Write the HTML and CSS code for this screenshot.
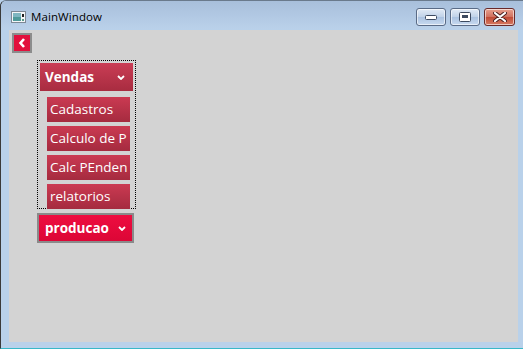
FILE: index.html
```html
<!DOCTYPE html>
<html lang="pt">
    <head>
        <meta charset="utf-8">
        <title>MainWindow</title>
        <link rel="stylesheet" href="styles.css">
    </head>
    <body>
        <div class="window">
            <!-- barra de titulo -->
            <div class="titlebar">
                <span class="app-icon">
                    <svg width="15" height="12" viewBox="0 0 15 12">
                        <rect x="0.5" y="0.5" width="14" height="11" fill="#f4f6f8" stroke="#7d8894"/>
                        <rect x="2" y="2" width="8" height="8" fill="#4f9a9a"/>
                        <rect x="2" y="2" width="8" height="4" fill="#7fb6c0"/>
                        <rect x="11" y="3" width="2" height="3" fill="#202020"/>
                        <rect x="11" y="8" width="2" height="2" fill="#5a9a8a"/>
                    </svg>
                </span>
                <span class="title">MainWindow</span>
                <div class="caption-buttons">
                    <div class="cap-btn">
                        <svg width="12" height="5" viewBox="0 0 12 5"><rect x="0.5" y="0.5" width="11" height="4" rx="1" fill="#fff" stroke="#3c4a60"/></svg>
                    </div>
                    <div class="cap-btn">
                        <svg width="12" height="10" viewBox="0 0 12 10"><rect x="0.5" y="0.5" width="11" height="9" rx="1" fill="#fff" stroke="#3c4a60"/><rect x="3" y="3" width="6" height="3" fill="#3c4a60"/></svg>
                    </div>
                    <div class="cap-btn close">
                        <svg width="14" height="10" viewBox="0 0 14 10"><path d="M2 1 L12 9 M12 1 L2 9" stroke="#4a2020" stroke-width="4" stroke-linecap="round"/><path d="M2 1 L12 9 M12 1 L2 9" stroke="#fff" stroke-width="2.2" stroke-linecap="round"/></svg>
                    </div>
                </div>
            </div>

            <!-- area cliente -->
            <div class="client">
                <div class="back-btn">
                    <svg width="8" height="10" viewBox="0 0 8 10"><path d="M6 1 L2.5 5 L6 9" fill="none" stroke="#fff" stroke-width="2.6"/></svg>
                </div>

                <div class="expander focused">
                    <div class="exp-header">
                        <span>Vendas</span>
                        <svg width="8" height="5" viewBox="0 0 8 5"><path d="M1 1 L4 4 L7 1" fill="none" stroke="#fff" stroke-width="1.8"/></svg>
                    </div>
                    <div class="exp-items">
                        <div class="item">Cadastros</div>
                        <div class="item">Calculo de P</div>
                        <div class="item">Calc PEnden</div>
                        <div class="item">relatorios</div>
                    </div>
                </div>

                <div class="expander collapsed">
                    <div class="exp-header bright">
                        <span>producao</span>
                        <svg width="8" height="5" viewBox="0 0 8 5"><path d="M1 1 L4 4 L7 1" fill="none" stroke="#fff" stroke-width="1.8"/></svg>
                    </div>
                </div>
            </div>
        </div>
    </body>
</html>
```

FILE: styles.css
```css
/* janela */
body {
    margin: 0;
    padding: 0;
    background: #b9d1ea;
    font-family: "Open Sans", "Noto Sans", sans-serif;
}

.window {
    width: 522px;
    height: 347px;
    display: flex;
    flex-direction: column;
    background: #b9d1ea;
    border-left: 1px solid #3a3a3a;
    border-top: 1px solid #6a7a8c;
    border-radius: 6px 0 0 0;
    border-bottom: 1px solid #38b8c8;
    box-shadow: 0 1px 0 #000;
}

/* barra de titulo */
.titlebar {
    height: 28px;
    flex: none;
    display: flex;
    align-items: center;
    padding-left: 10px;
    background: linear-gradient(#a8bfdb, #bad1ea);
    border-radius: 6px 0 0 0;
}

.app-icon {
    display: flex;
    margin-top: 4px;
}

.title {
    margin-left: 5px;
    margin-top: 3px;
    font-size: 11.5px;
    color: #000;
    letter-spacing: 0.1px;
}

.caption-buttons {
    margin-left: auto;
    margin-right: 8px;
    margin-top: 4px;
    display: flex;
    gap: 4px;
}

.cap-btn {
    width: 28px;
    height: 16px;
    display: flex;
    align-items: center;
    justify-content: center;
    border: 1px solid #5a6b86;
    border-radius: 3px;
    background: linear-gradient(#e2ebf6, #c0d2e8 50%, #aac2e0 51%, #c8daf0);
    box-shadow: inset 0 0 0 1px rgba(255, 255, 255, 0.6);
}

.cap-btn.close {
    width: 29px;
    border-color: #6a2a2a;
    background: linear-gradient(#e8a08e, #d0705e 50%, #c04a36 51%, #d67a62);
}

/* conteudo */
.client {
    flex: 1;
    margin: 1px 5px 6px 8px;
    background: #d3d3d3;
    padding: 3px 0 0 3px;
}

.back-btn {
    width: 16px;
    height: 16px;
    border: 2px solid #8c8c8c;
    background: #e2103c;
    display: flex;
    align-items: center;
    justify-content: center;
}

.expander {
    width: 93px;
    margin-left: 25px;
}

.expander.focused {
    margin-top: 7px;
    width: 95px;
    height: 144px;
    border: 1px dotted #000;
    padding: 2px 1px 1px 1px;
}

.expander.collapsed {
    margin-top: 4px;
    border: 2px solid #8a8a8a;
}

.exp-header {
    height: 28px;
    display: flex;
    align-items: center;
    justify-content: space-between;
    padding: 0 8px 0 5px;
    background: linear-gradient(#ca3d55, #a82c40);
    color: #fff;
    font-size: 13.5px;
    font-weight: bold;
}

.expander.focused .exp-header {
    margin: 0 1px;
}

.exp-header svg {
    margin-top: 1px;
}

.exp-header.bright {
    height: 26px;
    padding: 0 6px 0 6px;
    background: linear-gradient(#ee0d40, #dc0636);
}

.exp-items {
    padding: 6px 0 0 8px;
}

.item {
    width: 80px;
    height: 25px;
    margin-bottom: 4px;
    padding-left: 3px;
    line-height: 25px;
    background: linear-gradient(#cb3a52, #a52b3f);
    color: #fff;
    font-size: 13.5px;
    white-space: nowrap;
    overflow: hidden;
}
```
